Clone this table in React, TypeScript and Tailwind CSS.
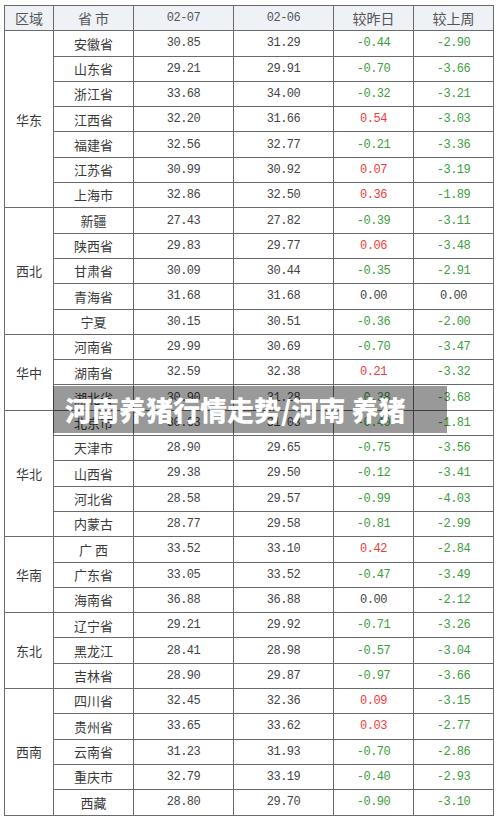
import React from "react";

type Row = [string, string, string, string, string];
type Region = { name: string; rows: Row[] };

const data: Region[] = [
  {
    name: "华东",
    rows: [
      ["安徽省", "30.85", "31.29", "-0.44", "-2.90"],
      ["山东省", "29.21", "29.91", "-0.70", "-3.66"],
      ["浙江省", "33.68", "34.00", "-0.32", "-3.21"],
      ["江西省", "32.20", "31.66", "0.54", "-3.03"],
      ["福建省", "32.56", "32.77", "-0.21", "-3.36"],
      ["江苏省", "30.99", "30.92", "0.07", "-3.19"],
      ["上海市", "32.86", "32.50", "0.36", "-1.89"],
    ],
  },
  {
    name: "西北",
    rows: [
      ["新疆", "27.43", "27.82", "-0.39", "-3.11"],
      ["陕西省", "29.83", "29.77", "0.06", "-3.48"],
      ["甘肃省", "30.09", "30.44", "-0.35", "-2.91"],
      ["青海省", "31.68", "31.68", "0.00", "0.00"],
      ["宁夏", "30.15", "30.51", "-0.36", "-2.00"],
    ],
  },
  {
    name: "华中",
    rows: [
      ["河南省", "29.99", "30.69", "-0.70", "-3.47"],
      ["湖南省", "32.59", "32.38", "0.21", "-3.32"],
      ["湖北省", "30.90", "31.28", "-0.38", "-3.68"],
    ],
  },
  {
    name: "华北",
    rows: [
      ["北京市", "30.63", "31.03", "-0.40", "-1.81"],
      ["天津市", "28.90", "29.65", "-0.75", "-3.56"],
      ["山西省", "29.38", "29.50", "-0.12", "-3.41"],
      ["河北省", "28.58", "29.57", "-0.99", "-4.03"],
      ["内蒙古", "28.77", "29.58", "-0.81", "-2.99"],
    ],
  },
  {
    name: "华南",
    rows: [
      ["广 西", "33.52", "33.10", "0.42", "-2.84"],
      ["广东省", "33.05", "33.52", "-0.47", "-3.49"],
      ["海南省", "36.88", "36.88", "0.00", "-2.12"],
    ],
  },
  {
    name: "东北",
    rows: [
      ["辽宁省", "29.21", "29.92", "-0.71", "-3.26"],
      ["黑龙江", "28.41", "28.98", "-0.57", "-3.04"],
      ["吉林省", "28.90", "29.87", "-0.97", "-3.66"],
    ],
  },
  {
    name: "西南",
    rows: [
      ["四川省", "32.45", "32.36", "0.09", "-3.15"],
      ["贵州省", "33.65", "33.62", "0.03", "-2.77"],
      ["云南省", "31.23", "31.93", "-0.70", "-2.86"],
      ["重庆市", "32.79", "33.19", "-0.40", "-2.93"],
      ["西藏", "28.80", "29.70", "-0.90", "-3.10"],
    ],
  },
];

const spanClass: Record<number, string> = {
  3: "row-span-3",
  5: "row-span-5",
  7: "row-span-7",
};

const cell =
  "flex items-center justify-center border-r border-b border-[#6a6a6a]";
const cjk = "font-['Noto_Sans_CJK_SC',sans-serif] text-[13px]";
const mono = "font-['Liberation_Mono',monospace] text-[12px] tracking-[-0.5px]";
const head = "bg-[#eef1f6] text-[#555]";

function colorFor(v: string) {
  const n = parseFloat(v);
  if (n > 0) return "text-[#f23a3a]";
  if (n < 0) return "text-[#3c9e3c]";
  return "text-[#444]";
}

export default function App() {
  return (
    <div className="relative w-[500px] h-[821px] bg-white">
      <div className="pt-[5px] pl-[4px]">
        <div className="grid w-[490px] grid-cols-[49px_80px_100px_100px_80px_80px] grid-rows-[repeat(32,25.3px)] border-l border-t border-[#6a6a6a]">
          <div className={`${cell} font-['Noto_Sans_CJK_SC',sans-serif] text-[14px] ${head}`}>区域</div>
          <div className={`${cell} font-['Noto_Sans_CJK_SC',sans-serif] text-[14px] ${head}`}>省&nbsp;市</div>
          <div className={`${cell} ${mono} ${head}`}>02-07</div>
          <div className={`${cell} ${mono} ${head}`}>02-06</div>
          <div className={`${cell} font-['Noto_Sans_CJK_SC',sans-serif] text-[14px] ${head}`}>较昨日</div>
          <div className={`${cell} font-['Noto_Sans_CJK_SC',sans-serif] text-[14px] ${head}`}>较上周</div>
          {data.map((region) => (
            <React.Fragment key={region.name}>
              <div className={`${cell} ${cjk} text-[#3a3a3a] ${spanClass[region.rows.length]}`}>
                {region.name}
              </div>
              {region.rows.map((r) => (
                <React.Fragment key={r[0]}>
                  <div className={`${cell} ${cjk} text-[#3a3a3a] whitespace-pre`}>{r[0]}</div>
                  <div className={`${cell} ${mono} text-[#444]`}>{r[1]}</div>
                  <div className={`${cell} ${mono} text-[#444]`}>{r[2]}</div>
                  <div className={`${cell} ${mono} ${colorFor(r[3])}`}>{r[3]}</div>
                  <div className={`${cell} ${mono} ${colorFor(r[4])}`}>{r[4]}</div>
                </React.Fragment>
              ))}
            </React.Fragment>
          ))}
        </div>
      </div>
      <div className="absolute left-[53px] top-[386px] flex h-[47px] w-[394px] items-center bg-black/40 pl-[12px]">
        <span className="font-['Noto_Sans_CJK_SC',sans-serif] text-[27px] font-black leading-none text-white">
          河南养猪行情走势/河南 养猪
        </span>
      </div>
    </div>
  );
}
